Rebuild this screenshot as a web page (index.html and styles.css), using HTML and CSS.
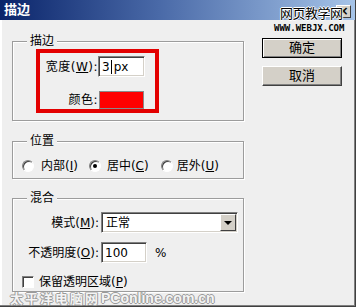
FILE: index.html
```html
<!DOCTYPE html>
<html>
<head>
<meta charset="utf-8">
<link rel="stylesheet" href="styles.css">
</head>
<body>
<div class="win">
  <div class="titlebar">
    <span class="title">描边</span>
    <span class="close">×</span>
  </div>
  <div class="content">
    <div class="left">
      <div class="group g1">
        <span class="legend">描边</span>
        <div class="redbox">
          <div class="row">
            <span class="lbl lbl-a">宽度(<u>W</u>):</span>
            <div class="field f-width"><span>3</span><i class="caret"></i><span>px</span></div>
          </div>
          <div class="row row-color">
            <span class="lbl lbl-a">颜色:</span>
            <div class="swatch"></div>
          </div>
        </div>
      </div>
      <div class="group g2">
        <span class="legend">位置</span>
        <div class="radios">
          <span class="opt o1"><i class="radio"></i>内部(<u>I</u>)</span>
          <span class="opt o2"><i class="radio on"></i>居中(<u>C</u>)</span>
          <span class="opt o3"><i class="radio"></i>居外(<u>U</u>)</span>
        </div>
      </div>
      <div class="group g3">
        <span class="legend">混合</span>
        <div class="row">
          <span class="lbl lbl-b">模式(<u>M</u>):</span>
          <div class="field select"><span class="sel-text">正常</span><span class="drop"><i class="tri"></i></span></div>
        </div>
        <div class="row row-op">
          <span class="lbl lbl-b">不透明度(<u>O</u>):</span>
          <div class="field f-op"><span>100</span></div>
          <span class="pct">%</span>
        </div>
        <div class="row row-chk">
          <i class="check"></i><span>保留透明区域(<u>P</u>)</span>
        </div>
      </div>
    </div>
    <div class="right">
      <div class="btn default"><span>确定</span></div>
      <div class="btn"><span>取消</span></div>
    </div>
  </div>
  <div class="wm-top">
    <div class="wm-cn">网页教学网</div>
    <div class="wm-en">WWW.WEBJX.COM</div>
  </div>
  <div class="wm-bottom"><span class="wm-b-cn">太平洋电脑网</span><span class="wm-b-en">PConline.com.cn</span></div>
</div>
</body>
</html>
```
FILE: styles.css
```css
* { box-sizing: border-box; }
html, body { margin: 0; padding: 0; background: #efefef; }
body { font-family: "DejaVu Sans", "Noto Sans CJK SC", sans-serif; font-size: 12px; line-height: 14px; color: #000; }
u { text-decoration: underline; text-underline-offset: 1px; }

.win {
  position: relative;
  width: 356px; height: 307px;
  background: #efefef;
  border-right: 1px solid #404040;
  border-bottom: 1px solid #404040;
  box-shadow: inset -1px -1px 0 #808080, inset 2px 0 0 #fff;
  overflow: hidden;
}

.titlebar {
  height: 20px;
  background: linear-gradient(to right, #0a246a 0%, #4a6aa8 45%, #a6c4e8 100%);
  display: flex; align-items: center; justify-content: space-between;
  padding: 0 4px 0 4px;
}
.title { color: #fff; font-weight: bold; font-size: 13px; line-height: 14px; }
.close {
  width: 15px; height: 13px; margin-top: 2px;
  background: #d4d0c8;
  border-top: 1px solid #fff; border-left: 1px solid #fff;
  border-right: 1px solid #404040; border-bottom: 1px solid #404040;
  font-family: "DejaVu Sans", sans-serif; font-weight: bold; font-size: 12px; line-height: 10px;
  text-align: center;
}

.content { display: flex; padding: 21px 0 0 12px; }
.left { width: 232px; display: flex; flex-direction: column; }
.right { margin-left: 18px; margin-top: -3px; display: flex; flex-direction: column; gap: 8px; }

.group {
  position: relative;
  border: 1px solid #9c9c9c;
  box-shadow: inset 1px 1px 0 #fff, 1px 1px 0 #fff;
}
.legend {
  position: absolute; top: -8px; left: 14px;
  padding: 0 3px; background: #efefef; line-height: 14px;
}
.g1 { height: 80px; padding: 7px 0 0 23px; }
.g2 { height: 38px; margin-top: 20px; padding: 17px 0 0 9px; }
.g3 { height: 94px; margin-top: 19px; padding: 13px 0 0 0; }

.redbox {
  width: 123px; height: 64px;
  border: 4px solid #e30000;
  padding-top: 3px;
}
.row { display: flex; align-items: center; }
.lbl { text-align: right; white-space: nowrap; }
.lbl-a { width: 58px; letter-spacing: 0.5px; }
.row-color { margin-top: 14px; }

.field {
  background: #fff;
  border-top: 1px solid #808080; border-left: 1px solid #808080;
  border-right: 1px solid #fff; border-bottom: 1px solid #fff;
  box-shadow: inset 1px 1px 0 #404040, inset -1px -1px 0 #d4d0c8;
  display: flex; align-items: center;
  padding-left: 3px;
}
.f-width { width: 47px; height: 21px; }
.caret { display: inline-block; width: 1px; height: 14px; background: #000; margin: 0 2px 0 1px; }
.swatch {
  width: 45px; height: 18px; margin-left: 1px;
  background: #ff0000;
  border: 1px solid #8a8a8a;
}

.radios { display: flex; }
.opt { display: flex; align-items: center; white-space: nowrap; }
.o2 { margin-left: 11px; }
.o3 { margin-left: 12px; }
.radio {
  display: inline-block; width: 12px; height: 12px; border-radius: 50%;
  background: #fff;
  border: 1px solid; border-color: #808080 #fff #fff #808080;
  box-shadow: inset 1px 1px 0 #404040;
  margin-right: 6px; position: relative;
}
.o1 .radio { margin-right: 7px; }
.o3 .radio { margin-right: 4px; }
.radio.on::after {
  content: ""; position: absolute; left: 3px; top: 3px; width: 4px; height: 4px; border-radius: 50%; background: #000;
}

.lbl-b { width: 86px; }
.select { width: 137px; height: 21px; margin-left: 2px; justify-content: space-between; padding-right: 1px; }
.sel-text { margin-left: 1px; }
.drop {
  width: 16px; height: 17px;
  background: #d4d0c8;
  border-top: 1px solid #fff; border-left: 1px solid #fff;
  border-right: 1px solid #404040; border-bottom: 1px solid #404040;
  display: flex; align-items: center; justify-content: center;
}
.tri { width: 0; height: 0; border-left: 4px solid transparent; border-right: 4px solid transparent; border-top: 4px solid #000; }
.row-op { margin-top: 9px; }
.f-op { width: 46px; height: 21px; margin-left: 2px; }
.pct { margin-left: 8px; }
.row-chk { margin-top: 12px; padding-left: 9px; }
.check {
  display: inline-block; width: 12px; height: 12px; background: #fff;
  border: 1px solid; border-color: #808080 #fff #fff #808080;
  box-shadow: inset 1px 1px 0 #404040;
  margin-right: 5px;
}

.btn {
  width: 80px; height: 20px;
  background: #d4d0c8;
  border-top: 1px solid #fff; border-left: 1px solid #fff;
  border-right: 1px solid #404040; border-bottom: 1px solid #404040;
  box-shadow: inset -1px -1px 0 #808080;
  display: flex; align-items: center; justify-content: center;
  font-size: 13px;
}
.btn.default { border: 1px solid #000; box-shadow: inset 1px 1px 0 #fff, inset -1px -1px 0 #808080; }

.wm-top { position: absolute; left: 274px; top: 7px; }
.wm-cn {
  font-size: 13px; line-height: 14px; margin-left: 6px; color: #000;
  text-shadow: 1px 0 0 #fff, -1px 0 0 #fff, 0 1px 0 #fff, 0 -1px 0 #fff;
  letter-spacing: -0.5px;
}
.wm-en {
  font-family: "DejaVu Sans Mono", monospace; font-weight: bold; font-size: 9px; line-height: 9px;
  margin-top: 3px; color: #000;
}
.wm-bottom {
  position: absolute; left: 10px; top: 291px;
  font-weight: bold;
  color: #f4f4f4;
  text-shadow: 1px 0 0 #9a9a9a, -1px 0 0 #9a9a9a, 0 1px 0 #9a9a9a, 0 -1px 0 #9a9a9a;
  white-space: nowrap;
  display: flex; align-items: baseline;
}
.wm-b-cn { font-family: "Noto Sans CJK SC", sans-serif; font-size: 13px; line-height: 14px; letter-spacing: 2px; }
.wm-b-en { font-family: "Liberation Sans", sans-serif; font-size: 14px; line-height: 14px; margin-left: 1px; }
```
